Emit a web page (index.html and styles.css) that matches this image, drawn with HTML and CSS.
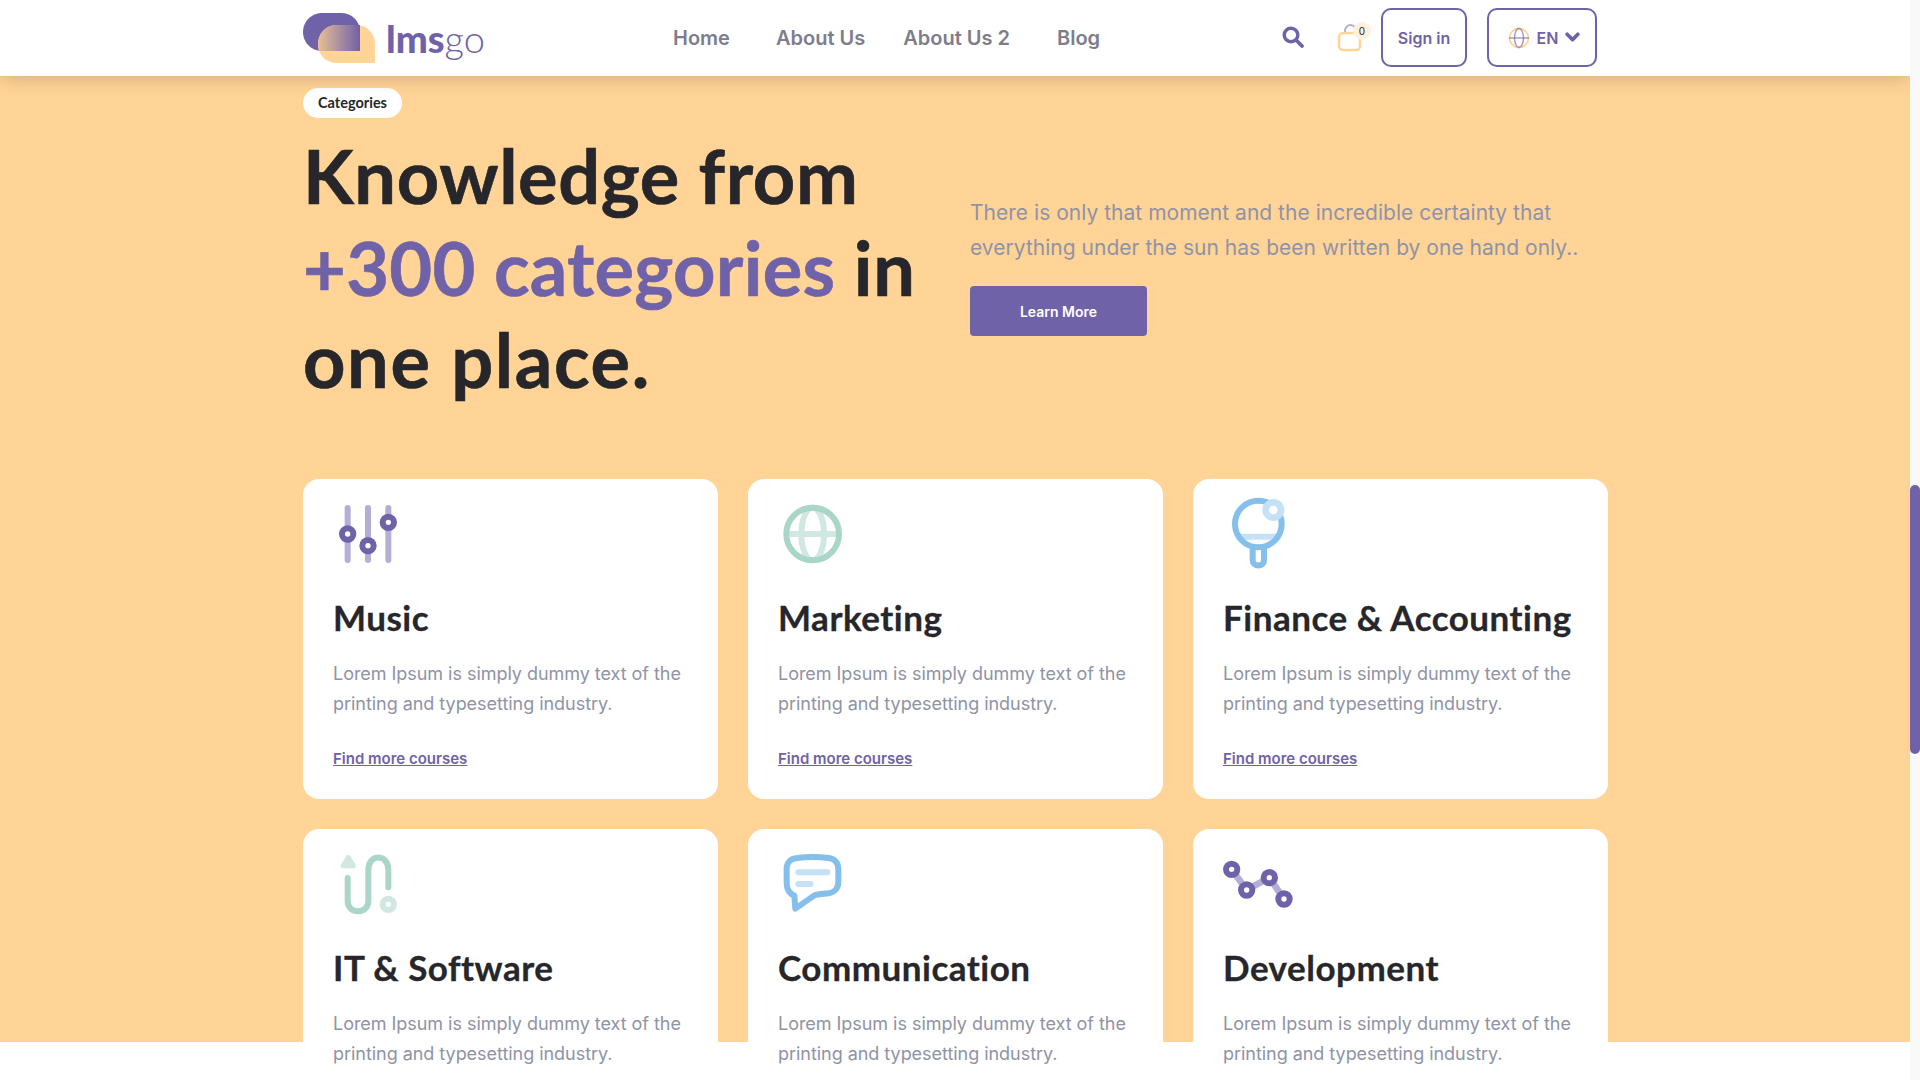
FILE: index.html
```html
<!DOCTYPE html>
<html lang="en">
<head>
<meta charset="utf-8">
<title>lmsgo</title>
<link rel="stylesheet" href="styles.css">
</head>
<body>
<div class="page">
  <div class="main">
    <header class="nav">
      <div class="nav-inner">
        <a class="logo">
          <svg class="logo-mark" viewBox="0 0 72 50" width="72" height="50">
            <defs><linearGradient id="lg" x1="0" x2="1" y1="0" y2="0"><stop offset="0" stop-color="#e9bf95"/><stop offset="1" stop-color="#6f62a8"/></linearGradient></defs>
            <path d="M19 0H38C49 0 57 8 57 19V38H19C8 38 0 29 0 19S8 0 19 0Z" fill="#6f62a8"/>
            <path d="M34 12H53C65 12 72 21 72 32V50H34C23 50 15 42 15 31S23 12 34 12Z" fill="#ffd496"/>
            <path d="M34 12H57V38H16C15 36 15 33 15 31C15 21 23 12 34 12Z" fill="url(#lg)"/>
          </svg>
          <span class="logo-text"><b>lms</b>go</span>
        </a>
        <nav class="menu">
          <a>Home</a>
          <a>About Us</a>
          <a class="tight">About Us 2</a>
          <a>Blog</a>
        </nav>
        <div class="actions">
          <svg class="search" viewBox="0 0 22 22" width="22" height="22"><circle cx="9" cy="9" r="6.8" fill="none" stroke="#6f62a8" stroke-width="3.4"/><path d="M14 14L20 20" stroke="#6f62a8" stroke-width="3.8" stroke-linecap="round"/></svg>
          <div class="cart">
            <svg viewBox="0 0 26 28" width="26" height="28"><path d="M8 10V7C8 3 11 1 13.500 1S19 3 19 7V10" fill="none" stroke="#b5aed4" stroke-width="2"/><rect x="2" y="9" width="21" height="17" rx="4" fill="#fff" stroke="#ffd496" stroke-width="2.500"/></svg>
            <span class="badge">0</span>
          </div>
          <a class="btn signin">Sign in</a>
          <a class="btn lang">
            <svg viewBox="0 0 22 22" width="22" height="22"><circle cx="11" cy="11" r="9.500" fill="none" stroke="#ffd496" stroke-width="1.800"/><ellipse cx="11" cy="11" rx="4.500" ry="9.500" fill="none" stroke="#6f62a8" stroke-opacity=".65" stroke-width="1.400"/><path d="M1 11H21" stroke="#6f62a8" stroke-opacity=".65" stroke-width="1.400"/></svg>
            <span>EN</span>
            <svg viewBox="0 0 14 10" width="15" height="11"><path d="M2 2L7 7L12 2" fill="none" stroke="#6f62a8" stroke-width="3.4" stroke-linecap="round" stroke-linejoin="round"/></svg>
          </a>
        </div>
      </div>
    </header>
    <section class="band">
      <div class="wrap">
        <span class="pill">Categories</span>
        <div class="hero">
          <h1>Knowledge from <em>+300 categories</em> in <span class="last">one place.</span></h1>
          <div class="hero-side">
            <p>There is only that moment and the incredible certainty that everything under the sun has been written by one hand only..</p>
            <a class="cta">Learn More</a>
          </div>
        </div>
        <div class="grid">
          <article class="card">
            <svg class="ico" viewBox="39 60 216 216"><g fill="none" stroke-linecap="round"><path d="M83 84V240M144 84V240M205 84V240" stroke="#b5aed4" stroke-width="18"/><g fill="#fff" stroke="#6f62a8" stroke-width="18"><circle cx="83" cy="162" r="17"/><circle cx="144" cy="197" r="17"/><circle cx="205" cy="127" r="17"/></g></g></svg>
            <h2>Music</h2>
            <p>Lorem Ipsum is simply dummy text of the printing and typesetting industry.</p>
            <a class="more">Find more courses</a>
          </article>
          <article class="card">
            <svg class="ico" viewBox="39 60 216 216"><g fill="none" stroke-width="18"><ellipse cx="143" cy="162" rx="34" ry="79" stroke="#d0e8e1"/><path d="M64 162H222" stroke="#d0e8e1"/><circle cx="143" cy="162" r="79" stroke="#a9d6c8"/></g></svg>
            <h2>Marketing</h2>
            <p>Lorem Ipsum is simply dummy text of the printing and typesetting industry.</p>
            <a class="more">Find more courses</a>
          </article>
          <article class="card">
            <svg class="ico" viewBox="39 60 216 216"><g fill="none"><path d="M90 170H200" stroke="#c5e1f6" stroke-width="18"/><circle cx="145" cy="132" r="70" stroke="#85bfec" stroke-width="18"/><path d="M128 205V240C128 262 162 262 162 240V205" stroke="#85bfec" stroke-width="18"/><circle cx="190" cy="90" r="23" fill="#fff" stroke="#c5e1f6" stroke-width="20"/></g></svg>
            <h2>Finance &amp; Accounting</h2>
            <p>Lorem Ipsum is simply dummy text of the printing and typesetting industry.</p>
            <a class="more">Find more courses</a>
          </article>
          <article class="card">
            <svg class="ico" viewBox="39 30 216 216"><path d="M85 52L101 78H69Z" fill="#d0e8e1" stroke="#d0e8e1" stroke-width="14" stroke-linejoin="round"/><path d="M83 114V183C83 224 145 224 145 183V90C145 40 205 40 205 90V142" fill="none" stroke="#a9d6c8" stroke-width="18" stroke-linecap="round"/><circle cx="205" cy="193" r="17" fill="none" stroke="#d0e8e1" stroke-width="18"/></svg>
            <h2>IT &amp; Software</h2>
            <p>Lorem Ipsum is simply dummy text of the printing and typesetting industry.</p>
          </article>
          <article class="card">
            <svg class="ico" viewBox="39 30 216 216"><path d="M100 97H187M100 132H137" stroke="#c5e1f6" stroke-width="18" stroke-linecap="round"/><path d="M96 54C125 50 160 50 191 54C209 56 220 68 220 88V125C220 145 208 157 191 160C176 162 161 162 148 166L91 206L88 166C76 163 65 150 65 130V85C65 68 77 56 96 54Z" fill="none" stroke="#85bfec" stroke-width="18" stroke-linejoin="round"/></svg>
            <h2>Communication</h2>
            <p>Lorem Ipsum is simply dummy text of the printing and typesetting industry.</p>
          </article>
          <article class="card">
            <svg class="ico" viewBox="39 30 216 216"><path d="M65 88L110 150L178 113L222 177" fill="none" stroke="#b5aed4" stroke-width="20"/><g fill="#fff" stroke="#6f62a8" stroke-width="18"><circle cx="65" cy="88" r="17"/><circle cx="110" cy="150" r="17"/><circle cx="178" cy="113" r="17"/><circle cx="222" cy="177" r="17"/></g></svg>
            <h2>Development</h2>
            <p>Lorem Ipsum is simply dummy text of the printing and typesetting industry.</p>
          </article>
        </div>
      </div>
    </section>
  </div>
  <aside class="scrollbar"><span class="thumb"></span></aside>
</div>
</body>
</html>
```
FILE: styles.css
```css
* { box-sizing: border-box; }
html, body { margin: 0; height: 100%; overflow: hidden; background: #fff; }
body { font-family: "Inter", sans-serif; color: #26262b; }
.page { display: flex; height: 1080px; }
.main { flex: 1; min-width: 0; overflow: hidden; background: #fff; }
.scrollbar { width: 10px; background: #f9f9f9; padding-top: 485px; }
.thumb { display: block; height: 269px; border-radius: 5px; background: #6f62a8; }

.nav { position: relative; z-index: 2; height: 76px; background: #fff; box-shadow: 0 0 20px rgba(0,0,0,.22); }
.nav-inner { width: 1305px; margin-left: 303px; height: 100%; display: flex; align-items: center; }
.logo { display: flex; align-items: center; gap: 11px; width: 370px; }
.logo-mark { display: block; flex: none; }
.logo-text { font-family: "Lato", sans-serif; font-size: 38px; font-weight: 300; color: #6f62a8; line-height: 1; }
.logo-text b { font-weight: 900; }
.menu { display: flex; gap: 46px; font-size: 20px; font-weight: 600; color: #7d7d8c; }
.menu .tight { margin-left: -8px; margin-right: 1px; }
.actions { display: flex; align-items: center; margin-left: auto; margin-right: 11px; }
.search { display: block; margin-right: 33px; margin-top: -3px; }
.cart { position: relative; width: 26px; height: 28px; margin-right: 18px; }
.cart svg { display: block; }
.badge { position: absolute; left: 16px; top: -2px; width: 18px; height: 18px; border-radius: 50%; background: #fff1dc; font-size: 10px; line-height: 18px; text-align: center; color: #26262b; }
.btn { display: flex; align-items: center; justify-content: center; height: 59px; margin-bottom: 1px; border: 2px solid #6f62a8; border-radius: 10px; color: #6f62a8; font-size: 16px; font-weight: 600; }
.signin { width: 86px; margin-right: 20px; }
.lang { width: 110px; gap: 7px; padding-left: 4px; }

.band { height: 966px; background: #ffd496; }
.wrap { width: 1305px; margin-left: 303px; padding-top: 12px; }
.pill { display: block; width: 99px; height: 30px; border-radius: 15px; background: #fff; font-family: "Lato", sans-serif; font-size: 14.500px; font-weight: 700; line-height: 30px; text-align: center; }
.hero { display: flex; }
h1 { width: 667px; flex: none; margin: 12px 0 0; font-family: "Lato", sans-serif; font-size: 74px; line-height: 92px; font-weight: 700; letter-spacing: .6px; -webkit-text-stroke: .6px currentColor; }
h1 em { font-style: normal; color: #6f62a8; letter-spacing: .25px; }
h1 .last { letter-spacing: 1.600px; }
.hero-side { padding-top: 77px; }
.hero-side p { margin: 0 0 21px; font-size: 21px; line-height: 35px; font-weight: 400; letter-spacing: .02px; color: #8f93a6; }
.cta { display: flex; align-items: center; justify-content: center; width: 177px; height: 50px; border-radius: 4px; background: #6f62a8; color: #fff; font-size: 14px; font-weight: 600; }

.grid { display: grid; grid-template-columns: repeat(3, 415px); gap: 30px; margin-top: 73px; }
.card { height: 320px; padding: 21px 30px 0; background: #fff; border-radius: 16px; }
.ico { display: block; width: 72px; height: 72px; overflow: visible; }
h2 { margin: 24px 0 0; font-family: "Lato", sans-serif; font-size: 35px; line-height: 42px; font-weight: 700; letter-spacing: .5px; white-space: nowrap; -webkit-text-stroke: .3px currentColor; }
.card p { margin: 21px 0 0; font-size: 18px; line-height: 30px; font-weight: 400; letter-spacing: -.04px; color: #8f93a6; }
.more { display: block; margin-top: 30px; font-size: 15px; font-weight: 600; line-height: 20px; color: #6f62a8; text-decoration: underline; }
```
